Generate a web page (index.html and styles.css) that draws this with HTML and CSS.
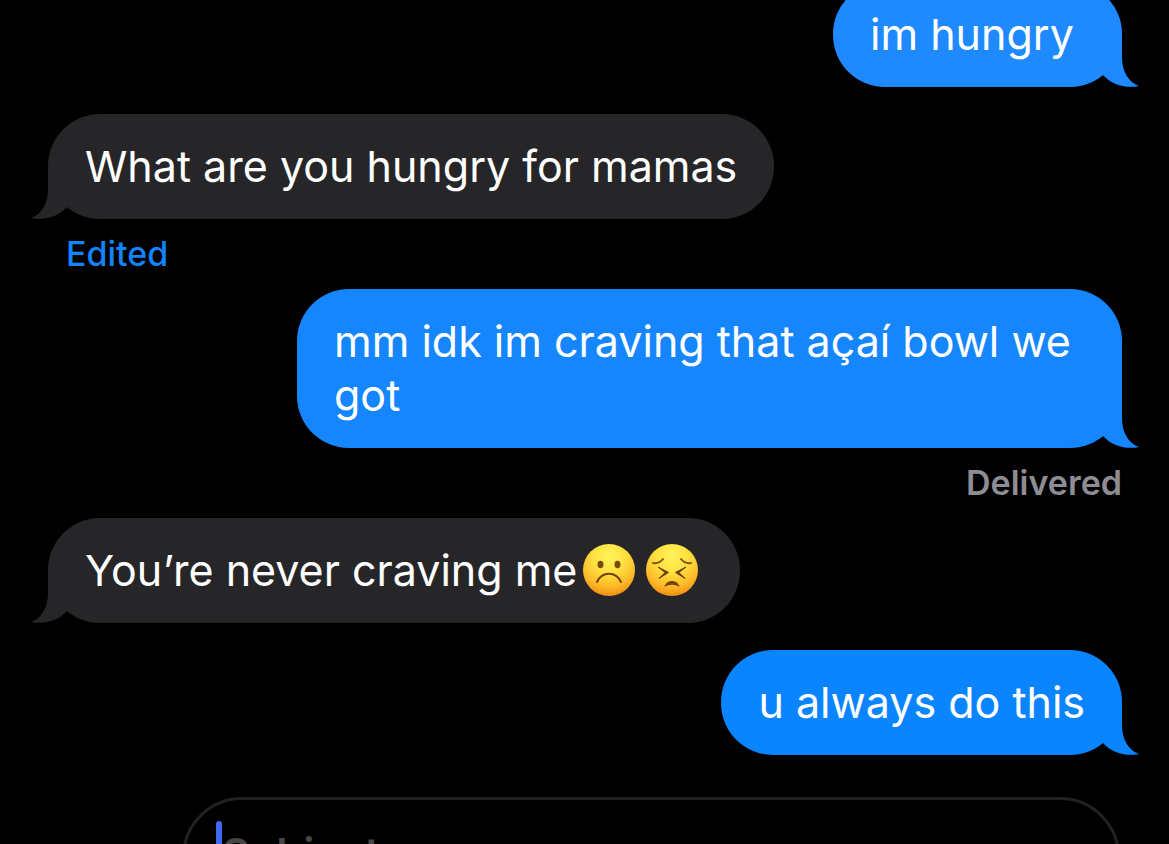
FILE: index.html
```
<!DOCTYPE html>
<html lang="en">
  <head>
    <meta charset="UTF-8" />
    <meta name="viewport" content="width=device-width, initial-scale=1.0" />
    <title>Messages</title>
    <link rel="stylesheet" href="styles.css">
  </head>
  <body>
    <!-- Shared bubble tail -->
    <svg class="symbols" width="0" height="0" aria-hidden="true">
      <symbol id="tail" viewBox="0 0 40 50">
        <path d="M23 0V20C23 34 29 45 40 49C26 52 12 47 4 38L4 10L14 0Z" fill="currentColor" />
      </symbol>
    </svg>

    <main class="chat">
      <div class="message sent first">
        im hungry
        <svg class="tail" aria-hidden="true"><use href="#tail" /></svg>
      </div>

      <div class="message received">
        What are you hungry for mamas
        <svg class="tail" aria-hidden="true"><use href="#tail" /></svg>
      </div>
      <button class="status edited" type="button">Edited</button>

      <div class="message sent second">
        mm idk im craving that açaí bowl we got
        <svg class="tail" aria-hidden="true"><use href="#tail" /></svg>
      </div>
      <div class="status delivered">Delivered</div>

      <div class="message received">
        You’re never craving me<svg class="emoji" viewBox="0 0 52 52" role="img" aria-label="Frowning face">
          <defs>
            <radialGradient id="face" cx="50%" cy="24%" r="78%">
              <stop offset="0" stop-color="#fff45a" />
              <stop offset="0.4" stop-color="#ffe040" />
              <stop offset="0.75" stop-color="#fdb927" />
              <stop offset="1" stop-color="#ee8a12" />
            </radialGradient>
          </defs>
          <circle cx="26" cy="26" r="26" fill="url(#face)" />
          <ellipse cx="17.5" cy="20.5" rx="3" ry="3.8" fill="#7a4a0b" />
          <ellipse cx="34.5" cy="20.5" rx="3" ry="3.8" fill="#7a4a0b" />
          <path d="M14 38C19 27 33 27 38 38" fill="none" stroke="#71430a" stroke-width="2" stroke-linecap="round" />
        </svg><svg class="emoji" viewBox="0 0 52 52" role="img" aria-label="Persevering face">
          <circle cx="26" cy="26" r="26" fill="url(#face)" />
          <path d="M7 19Q13 20 17 15M45 19Q39 20 35 15" fill="none" stroke="#8a560b" stroke-width="2" stroke-linecap="round" />
          <path d="M12 23L22.500 28.500L13 34.500L19 28.500ZM40 23L29.500 28.500L39 34.500L33 28.500Z" fill="#6c3f08" stroke="#6c3f08" stroke-width="1" stroke-linejoin="round" />
          <path d="M18.500 43C20 35 32 35 33.500 43C29 40 23 40 18.500 43Z" fill="#74440b" />
        </svg>
        <svg class="tail" aria-hidden="true"><use href="#tail" /></svg>
      </div>

      <div class="message sent third">
        u always do this
        <svg class="tail" aria-hidden="true"><use href="#tail" /></svg>
      </div>
    </main>

    <form class="composer">
      <span class="caret"></span>
      <input class="subject" type="text" placeholder="Subject" aria-label="Subject" />
    </form>
  </body>
</html>
```
FILE: styles.css
```
* {
  box-sizing: border-box;
}

body {
  margin: 0;
  height: 100vh;
  overflow: hidden;
  background-color: #000;
  color: #fff;
  font-family: Inter, "Liberation Sans", sans-serif;
  font-size: 43px;
  line-height: 54px;
}

.symbols {
  position: absolute;
}

/* Scrolled so that the first bubble is cut by the top edge */
.chat {
  display: flex;
  flex-direction: column;
  margin-top: -18px;
  padding: 0 47px 0 48px;
}

.message {
  position: relative;
  max-width: 825px;
  padding: 25px 37px 26px;
  border-radius: 52px;
}

.message + .message {
  margin-top: 27px;
}

.sent {
  align-self: flex-end;
}

.received {
  align-self: flex-start;
  background-color: #262629;
}

.first {
  min-width: 289px;
  background-color: #1f8aff;
}

.second {
  background-color: #1686ff;
}

.third {
  background-color: #0b84ff;
}

.tail {
  position: absolute;
  right: -17px;
  bottom: 0;
  width: 40px;
  height: 50px;
}

.first .tail {
  color: #1f8aff;
}

.second .tail {
  color: #1686ff;
}

.third .tail {
  color: #0b84ff;
}

.received .tail {
  right: auto;
  left: -17px;
  color: #262629;
  transform: scaleX(-1);
}

.emoji {
  width: 52px;
  height: 52px;
  margin: 1px 5px 0 6px;
  vertical-align: top;
}

.status {
  font-family: inherit;
  font-size: 34px;
  line-height: 40px;
  padding: 15px 0;
}

.edited {
  align-self: flex-start;
  margin: 0 0 0 18px;
  border: none;
  background: none;
  color: #1184fe;
  font-weight: 500;
  cursor: pointer;
}

.delivered {
  align-self: flex-end;
  color: #8d8d93;
  font-weight: 600;
}

/* Message composer */
.composer {
  display: flex;
  margin: 42px 49px 0 182px;
  padding: 21px 31px;
  height: 160px;
  border: 3px solid #212122;
  border-radius: 60px;
}

.caret {
  width: 6px;
  height: 54px;
  border-radius: 3px;
  background-color: #4169f0;
}

.subject {
  flex: 1;
  min-width: 0;
  height: 64px;
  padding: 0;
  border: none;
  outline: none;
  background: none;
  color: #fff;
  font: inherit;
  font-weight: 600;
}

.subject::placeholder {
  color: #464649;
  opacity: 1;
}
```
